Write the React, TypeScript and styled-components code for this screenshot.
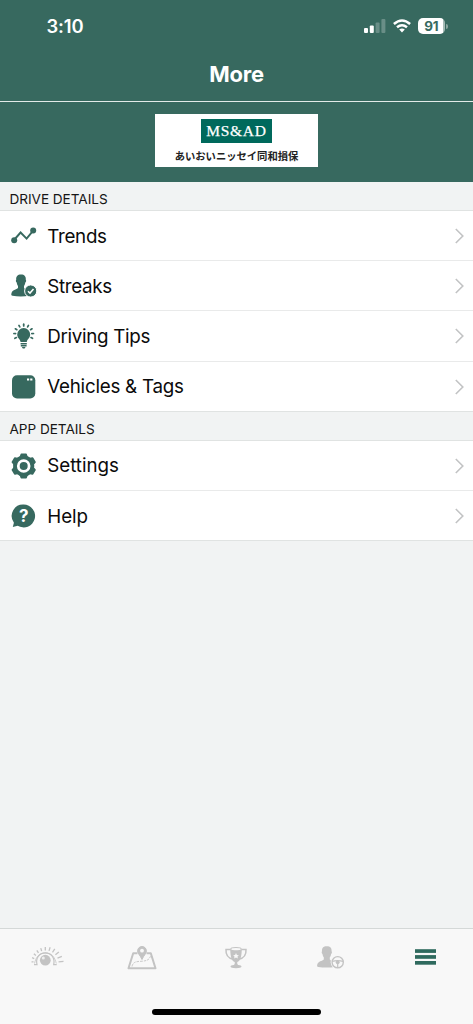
import React from "react";
import styled, { createGlobalStyle } from "styled-components";

const GREEN = "#37695f";
const GREY = "#c3c3c3";

const GlobalStyle = createGlobalStyle`
  * { box-sizing: border-box; }
  body { margin: 0; background: #f1f3f3; font-family: Inter, "Liberation Sans", sans-serif; color: #0b0b0b; }
  svg { display: block; flex: none; }
`;

const Screen = styled.div`
  width: 473px;
  height: 1024px;
  display: flex;
  flex-direction: column;
  overflow: hidden;
  background: #f1f3f3;
`;

const StatusBar = styled.div`
  height: 50px;
  flex: none;
  display: flex;
  align-items: center;
  justify-content: space-between;
  padding: 2px 25px 0 46.5px;
  background: ${GREEN};
  color: #fff;
`;

const Clock = styled.span`
  font-size: 18.4px;
  font-weight: 600;
  letter-spacing: -0.1px;
`;

const StatusIcons = styled.div`
  display: flex;
  align-items: center;
  gap: 7px;
`;

const Battery = styled.div`
  display: flex;
  align-items: center;
  gap: 1px;
`;

const BatteryBody = styled.div`
  width: 27.5px;
  height: 16px;
  border-radius: 5px;
  background: linear-gradient(90deg, #fff 92%, #a5bbb6 92%);
  color: ${GREEN};
  font-size: 13.5px;
  font-weight: 700;
  line-height: 16px;
  text-align: center;
  letter-spacing: -0.2px;
`;

const BatteryCap = styled.div`
  width: 2px;
  height: 5px;
  border-radius: 0 2px 2px 0;
  background: #8ba69f;
`;

const TitleBar = styled.h1`
  height: 52px;
  flex: none;
  margin: 0;
  display: flex;
  align-items: center;
  justify-content: center;
  padding-bottom: 3px;
  background: ${GREEN};
  border-bottom: 1px solid #e2eae8;
  color: #fff;
  font-size: 22px;
  font-weight: 650;
  letter-spacing: -0.2px;
`;

const Banner = styled.div`
  height: 80px;
  flex: none;
  display: flex;
  justify-content: center;
  padding-top: 12px;
  background: ${GREEN};
`;

const LogoCard = styled.div`
  width: 163px;
  height: 53px;
  display: flex;
  flex-direction: column;
  align-items: center;
  padding-top: 5px;
  background: #fff;
`;

const LogoMark = styled.div`
  width: 71px;
  height: 24px;
  background: #00695c;
  color: #fff;
  font: 15.5px/24px "Liberation Serif", serif;
  -webkit-text-stroke: 0.25px #fff;
  text-align: center;
  white-space: nowrap;
  letter-spacing: 0.7px;
`;

const LogoName = styled.div`
  margin-top: 5px;
  font: 700 10.3px/15px "Noto Sans CJK JP", sans-serif;
  color: #222;
  white-space: nowrap;
`;

const SectionTitle = styled.h2`
  height: 29px;
  flex: none;
  margin: 0;
  padding: 2px 9.5px 0;
  border-bottom: 1px solid #e0e3e2;
  font-size: 13.6px;
  font-weight: 400;
  line-height: 30px;
  letter-spacing: -0.04px;
  color: #161616;
`;

const List = styled.div`
  flex: none;
  background: #fff;
  border-bottom: 1px solid #e0e3e2;
`;

const Row = styled.div`
  height: 50.2px;
  display: flex;
  align-items: center;
  margin-left: 10px;
  padding: 1px 9.5px 0 0;
  border-bottom: 1px solid #e9eaea;
  &:last-child { height: 49.2px; border-bottom: 0; }
`;

const RowLabel = styled.span<{ $spacing: number }>`
  flex: 1;
  margin-left: 9.3px;
  font-size: 18.8px;
  letter-spacing: ${(p) => p.$spacing}px;
`;

const TabBar = styled.nav`
  height: 96px;
  flex: none;
  margin-top: auto;
  display: flex;
  flex-direction: column;
  justify-content: space-between;
  align-items: center;
  padding-bottom: 9px;
  border-top: 1px solid #d4d8d7;
  background: #f8f8f8;
`;

const Tabs = styled.div`
  width: 100%;
  display: grid;
  grid-template-columns: repeat(5, 1fr);
  justify-items: center;
  padding-top: 12px;
`;

const HomeIndicator = styled.div`
  width: 169px;
  height: 6px;
  border-radius: 3px;
  background: #000;
`;

const Signal = () => (
  <svg width="22" height="14" viewBox="0 0 22 14" fill="#fff">
    <rect x="0" y="9" width="4" height="5" rx="1" />
    <rect x="5.8" y="6.5" width="4" height="7.5" rx="1" />
    <rect x="11.6" y="3.5" width="4" height="10.5" rx="1" opacity=".25" />
    <rect x="17.4" y="0" width="4" height="14" rx="1" opacity=".25" />
  </svg>
);

const Wifi = () => (
  <svg width="18" height="14" viewBox="0 0 18 14">
    <g fill="none" stroke="#fff" strokeWidth="2.5">
      <path d="M.9 5Q9-2.1 17.1 5" />
      <path d="M4 8.3Q9 4.2 14 8.3" />
    </g>
    <path d="M6.2 10.5Q9 8.6 11.8 10.5L9 13.6Z" fill="#fff" />
  </svg>
);

const Chevron = () => (
  <svg width="9" height="16" viewBox="0 0 9 16" fill="none" stroke="#c2c3c4" strokeWidth="1.6">
    <path d="M.8 1 7.8 8 .8 15" />
  </svg>
);

const PERSON =
  "M9.800 0C6.300 0 4.700 2 5 5.200c-.7.8-.2 2.400.5 2.800.2 1.600.7 2.600 1.300 3.300v2.200C5.400 15.100.8 15 .1 19.400c-.1 1 .2 1.500 1.200 1.700 5 .9 11.500.9 16.500 0 1-.2 1.300-.8 1.200-1.700-.6-4.400-5-4.300-6.200-5.900v-2.200c.6-.7 1.100-1.700 1.300-3.300.8-.4 1.200-2 .5-2.800C14.900 2 13.300 0 9.800 0Z";

const Trends = () => (
  <svg width="28" height="28" viewBox="0 0 28 28" fill={GREEN}>
    <path d="M4 18 10.600 10.500 16.600 16.600 23 8.800" fill="none" stroke={GREEN} strokeWidth="1.900" />
    <circle cx="4.200" cy="18.200" r="3" />
    <circle cx="23.200" cy="8.600" r="3" />
  </svg>
);

const Streaks = () => (
  <svg width="28" height="28" viewBox="0 0 28 28" fill={GREEN}>
    <g transform="translate(1.200 2.600)"><path d={PERSON} /></g>
    <circle cx="20.700" cy="19" r="6.100" stroke="#fff" strokeWidth="1" />
    <path d="m18 19.200 2 1.900 3.500-4" fill="none" stroke="#fff" strokeWidth="1.500" />
  </svg>
);

const Bulb = () => (
  <svg width="28" height="28" viewBox="0 0 28 28" fill={GREEN}>
    <path d="M13.700 6a6.500 6.500 0 0 0-6.500 6.500c0 3.700 3 4.600 3.400 7.500h6.200c.4-2.900 3.400-3.800 3.400-7.500A6.500 6.500 0 0 0 13.700 6Z" />
    <path d="M10.600 21h6.200v1.400h-6.200zM10.800 23.100h5.800v1.300h-5.800zM11.800 25.100h3.800l-1 1.500h-1.800z" />
    <g stroke={GREEN} strokeWidth="1.700" strokeLinecap="round">
      {[-116, -87, -58, -29, 0, 29, 58, 87, 116].map((a) => (
        <path key={a} d="M13.700 2.200v1.700" transform={`rotate(${a} 13.700 12)`} />
      ))}
    </g>
  </svg>
);

const Tag = () => (
  <svg width="28" height="28" viewBox="0 0 28 28">
    <rect x="2" y="2.200" width="23.300" height="23.300" rx="5" fill={GREEN} />
    <path d="M17 5.400h2.200v2H17zM20.200 5.400h2.200v2h-2.200z" fill="#fff" />
  </svg>
);

const Gear = () => (
  <svg width="28" height="28" viewBox="0 0 28 28">
    <g fill={GREEN}>
      <circle cx="13.700" cy="14" r="10.600" />
      {[0, 60, 120, 180, 240, 300].map((a) => (
        <path key={a} d="M9.400 5.500 10.500 2.200Q10.700 1.500 11.300 1.500h4.800q.6 0 .8.700L18 5.500Z" transform={`rotate(${a} 13.700 14)`} />
      ))}
    </g>
    <circle cx="13.700" cy="14" r="5.400" fill={GREEN} stroke="#fff" strokeWidth="2.800" />
  </svg>
);

const HelpText = styled.text`
  font: 700 17px Inter, sans-serif;
  text-anchor: middle;
`;

const Help = () => (
  <svg width="28" height="28" viewBox="0 0 28 28">
    <path d="M13.700 2.600a11.400 11.400 0 1 1-6 21.100L2.800 25.100l1.100-4.400A11.400 11.400 0 0 1 13.700 2.600Z" fill={GREEN} />
    <HelpText x="13.800" y="20" fill="#fff">?</HelpText>
  </svg>
);

const EyeTab = () => (
  <svg width="34" height="34" viewBox="0 0 34 34" fill={GREY}>
    <circle cx="15.300" cy="19.200" r="5.400" />
    <circle cx="13.300" cy="17" r="1.500" fill="#eee" />
    <g fill="none" stroke={GREY}>
      <path d="M4 23.700h3C5.300 17 9.500 11.800 15.300 11.800S25.300 17 23.700 23.700h3" strokeWidth="1.200" />
      <path d="M4.500 22.500C6 16 9 12 15.300 12s9.500 4 11 10.500" strokeWidth=".8" />
      {[-85, -68, -51, -34, -17, 0, 17, 34, 51, 68, 85].map((a, i) => (
        <path key={a} d={`M15.300 ${10.200 - i * 0.15}V${8.200 - i * 0.450}`} strokeWidth="1.300" transform={`rotate(${a} 15.300 22)`} />
      ))}
    </g>
  </svg>
);

const MapTab = () => (
  <svg width="34" height="34" viewBox="0 0 34 34" fill="none" stroke={GREY}>
    <path d="M12.500 12.300H8.200L3.500 27.200h27L25.800 12.300h-4.300" strokeWidth="2" strokeLinejoin="round" />
    <path d="M7 25.500c1-5 5-5 9-5.200 5-.3 8-1 9.500-5" strokeWidth=".9" strokeDasharray="2.500 1" />
    <path d="M17 5.500a4.400 4.400 0 0 0-4.400 4.400c0 2.900 2.600 4.200 4.400 8.600 1.800-4.400 4.400-5.700 4.400-8.600A4.400 4.400 0 0 0 17 5.500Z" fill={GREY} />
    <circle cx="17" cy="9.700" r="1.900" fill="#f8f8f8" stroke="none" />
  </svg>
);

const TrophyTab = () => (
  <svg width="34" height="34" viewBox="0 0 34 34" fill={GREY}>
    <path d="M11.200 8.200C11.500 17 12.800 19.500 15.700 21c.3 1.500-.1 2.400-.9 3-2.300.1-3.300.7-3.300 1.600 0 1 2.200 1.600 5.500 1.600s5.500-.6 5.500-1.600c0-.9-1-1.500-3.300-1.600-.8-.6-1.200-1.500-.9-3 2.900-1.500 4.200-4 4.500-12.800Z" />
    <ellipse cx="17" cy="8.200" rx="5.300" ry="1.700" fill="#f8f8f8" stroke={GREY} strokeWidth="1.200" />
    <path d="M11 8.600H7c-.4 5.200 2.700 8.600 7.200 9.700M23 8.600h4c.4 5.200-2.700 8.600-7.200 9.700" fill="none" stroke={GREY} strokeWidth="1.500" />
    <path d="m17 12.100.9 1.800 2 .3-1.400 1.400.3 2-1.800-1-1.800 1 .3-2-1.400-1.400 2-.3z" fill="#f8f8f8" />
  </svg>
);

const DriverTab = () => (
  <svg width="34" height="34" viewBox="0 0 34 34" fill={GREY}>
    <g transform="translate(3 5.200) scale(1 .98)"><path d={PERSON} /></g>
    <circle cx="23.700" cy="21.200" r="7" fill="#f8f8f8" />
    <g fill="none" stroke={GREY} strokeWidth="1.400">
      <circle cx="23.700" cy="21.200" r="5.600" />
      <path d="M18.200 20.400q5.500-1.600 11 0M23.700 22v4.500" strokeWidth="1.200" />
    </g>
    <circle cx="23.700" cy="21.300" r="1.900" />
  </svg>
);

const MenuTab = () => (
  <svg width="34" height="34" viewBox="0 0 34 34" fill="#2f6a5e">
    <rect x="6" y="8.200" width="21" height="3.700" />
    <rect x="6" y="14.100" width="21" height="3.700" />
    <rect x="6" y="20" width="21" height="3.700" />
  </svg>
);

type Item = { label: string; icon: React.ReactNode; spacing?: number };

const driveItems: Item[] = [
  { label: "Trends", icon: <Trends /> },
  { label: "Streaks", icon: <Streaks /> },
  { label: "Driving Tips", icon: <Bulb /> },
  { label: "Vehicles & Tags", icon: <Tag />, spacing: -0.25 },
];

const appItems: Item[] = [
  { label: "Settings", icon: <Gear />, spacing: -0.05 },
  { label: "Help", icon: <Help />, spacing: -0.1 },
];

const ItemList = ({ items }: { items: Item[] }) => (
  <List>
    {items.map((item) => (
      <Row key={item.label}>
        {item.icon}
        <RowLabel $spacing={item.spacing ?? -0.32}>{item.label}</RowLabel>
        <Chevron />
      </Row>
    ))}
  </List>
);

export default function App() {
  return (
    <Screen>
      <GlobalStyle />
      <StatusBar>
        <Clock>3:10</Clock>
        <StatusIcons>
          <Signal />
          <Wifi />
          <Battery>
            <BatteryBody>91</BatteryBody>
            <BatteryCap />
          </Battery>
        </StatusIcons>
      </StatusBar>
      <TitleBar>More</TitleBar>
      <Banner>
        <LogoCard>
          <LogoMark>MS&amp;AD</LogoMark>
          <LogoName>あいおいニッセイ同和損保</LogoName>
        </LogoCard>
      </Banner>
      <SectionTitle>DRIVE DETAILS</SectionTitle>
      <ItemList items={driveItems} />
      <SectionTitle>APP DETAILS</SectionTitle>
      <ItemList items={appItems} />
      <TabBar>
        <Tabs>
          <EyeTab />
          <MapTab />
          <TrophyTab />
          <DriverTab />
          <MenuTab />
        </Tabs>
        <HomeIndicator />
      </TabBar>
    </Screen>
  );
}
